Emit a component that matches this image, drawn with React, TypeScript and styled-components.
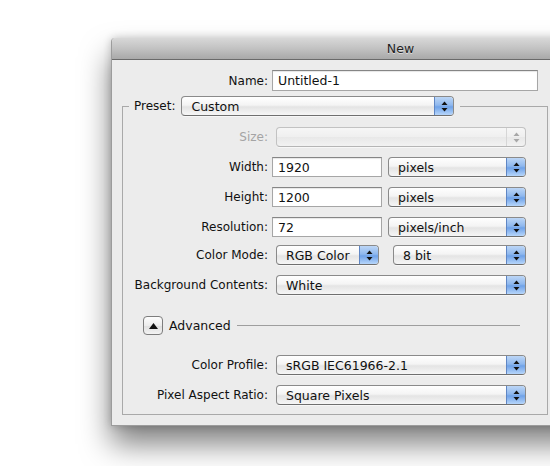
import React from "react"
import styled, { createGlobalStyle } from "styled-components"

const GlobalStyle = createGlobalStyle`
  html, body {
    margin: 0;
    padding: 0;
    background: #ffffff;
    overflow: hidden;
  }
  body {
    font-family: "DejaVu Sans", "Liberation Sans", sans-serif;
  }
`

const Page = styled.div`
  width: 550px;
  height: 466px;
  padding: 38px 0 0 111px;
  box-sizing: border-box;
  overflow: hidden;
  display: flex;
  align-items: flex-start;
`

const Window = styled.div`
  flex-shrink: 0;
  width: 578px;
  background: #ececec;
  border-left: 1px solid #9c9c9c;
  border-bottom: 1px solid #9c9c9c;
  border-top-left-radius: 4px;
  box-sizing: border-box;
  box-shadow: 0 18px 30px rgba(0, 0, 0, 0.5), 0 0 8px rgba(0, 0, 0, 0.2);
`

const TitleBar = styled.div`
  height: 21px;
  line-height: 21px;
  text-align: center;
  font-size: 12.5px;
  color: #1e1e1e;
  text-shadow: 0 1px 0 rgba(255, 255, 255, 0.5);
  background: linear-gradient(#d8d8d8, #c2c2c2 50%, #a9a9a9);
  border-bottom: 1px solid #6a6a6a;
  border-top-left-radius: 4px;
`

const Body = styled.div`
  padding: 10px 0 10px 0;
`

const Row = styled.div<{ $label: number; $mt?: number }>`
  display: grid;
  grid-template-columns: ${p => p.$label}px auto;
  align-items: center;
  column-gap: 4px;
  margin-top: ${p => p.$mt ?? 0}px;
`

const Label = styled.span<{ $disabled?: boolean }>`
  text-align: right;
  font-size: 12px;
  white-space: nowrap;
  color: ${p => (p.$disabled ? "#a4a4a4" : "#111111")};
`

const Controls = styled.div`
  display: flex;
  align-items: center;
`

const TextField = styled.div<{ $width: number; $height?: number }>`
  width: ${p => p.$width}px;
  height: ${p => p.$height ?? 20}px;
  box-sizing: border-box;
  background: #ffffff;
  border: 1px solid #a6a6a6;
  border-top-color: #858585;
  box-shadow: inset 0 1px 1px rgba(0, 0, 0, 0.1);
  padding-left: 5px;
  font-size: 12.5px;
  color: #111;
  display: flex;
  align-items: center;
`

const PopupBox = styled.div<{ $width: number; $ml?: number; $disabled?: boolean }>`
  width: ${p => p.$width}px;
  height: 20px;
  margin-left: ${p => p.$ml ?? 0}px;
  box-sizing: border-box;
  display: flex;
  align-items: stretch;
  border: 1px solid ${p => (p.$disabled ? "#c2c2c2" : "#8a8a8a")};
  border-bottom-color: ${p => (p.$disabled ? "#b5b5b5" : "#6f6f6f")};
  border-radius: 4px;
  overflow: hidden;
  background: ${p =>
    p.$disabled
      ? "linear-gradient(#f6f6f6, #efefef 50%, #e8e8e8 51%, #f2f2f2)"
      : "linear-gradient(#ffffff, #f4f4f4 45%, #e4e4e4 55%, #f6f6f6)"};
  box-shadow: 0 1px 0 rgba(255, 255, 255, 0.6);
`

const PopupText = styled.span`
  flex: 1;
  padding-left: 9px;
  font-size: 12.5px;
  color: #111;
  display: flex;
  align-items: center;
  white-space: nowrap;
  overflow: hidden;
`

const ArrowCap = styled.div<{ $disabled?: boolean }>`
  width: 18px;
  display: flex;
  align-items: center;
  justify-content: center;
  border-left: 1px solid ${p => (p.$disabled ? "#d6d6d6" : "#5f86c4")};
  background: ${p =>
    p.$disabled
      ? "transparent"
      : "linear-gradient(#bcd6f6, #8fb8ee 45%, #6fa2e8 55%, #b7d6fb)"};
`

const Group = styled.fieldset`
  margin: 5px 0 0 10px;
  width: 426px;
  box-sizing: border-box;
  border: 1px solid #a9a9a9;
  padding: 11px 0 9px 0;
  min-width: 0;
`

const Legend = styled.legend`
  margin-left: 6px;
  padding: 0 6px 0 5px;
  display: flex;
  align-items: center;
  gap: 6px;
`

const AdvancedRow = styled.div`
  display: flex;
  align-items: center;
  margin-top: 21px;
  padding-left: 20px;
  padding-right: 27px;
`

const DisclosureButton = styled.div`
  width: 20px;
  height: 19px;
  box-sizing: border-box;
  border: 1px solid #7d7d7d;
  border-radius: 4px;
  background: linear-gradient(#fdfdfd, #ececec 50%, #dedede 51%, #f3f3f3);
  display: flex;
  align-items: center;
  justify-content: center;
`

const AdvancedLabel = styled.span`
  margin-left: 6px;
  font-size: 12.5px;
  color: #111;
`

const Rule = styled.div`
  flex: 1;
  height: 1px;
  margin-left: 6px;
  background: #9e9e9e;
`

const Arrows = ({ disabled }: { disabled?: boolean }) => (
  <svg width="7" height="11" viewBox="0 0 7 11">
    <path d="M3.5 0.5 L6.5 4 L0.5 4 Z" fill={disabled ? "#a8a8a8" : "#111"} />
    <path d="M0.5 7 L6.5 7 L3.5 10.5 Z" fill={disabled ? "#a8a8a8" : "#111"} />
  </svg>
)

function Popup({
  value,
  width,
  ml,
  disabled
}: {
  value?: string
  width: number
  ml?: number
  disabled?: boolean
}) {
  return (
    <PopupBox $width={width} $ml={ml} $disabled={disabled}>
      <PopupText>{value}</PopupText>
      <ArrowCap $disabled={disabled}>
        <Arrows disabled={disabled} />
      </ArrowCap>
    </PopupBox>
  )
}

const LABEL = 145

export default function App() {
  return (
    <>
      <GlobalStyle />
      <Page>
        <Window>
          <TitleBar>New</TitleBar>
          <Body>
            <Row $label={156}>
              <Label>Name:</Label>
              <TextField $width={266} $height={21}>
                Untitled-1
              </TextField>
            </Row>
            <Group>
              <Legend>
                <Label>Preset:</Label>
                <Popup value="Custom" width={273} />
              </Legend>
              <Row $label={LABEL}>
                <Label $disabled>Size:</Label>
                <Controls>
                  <Popup width={250} ml={4} disabled />
                </Controls>
              </Row>
              <Row $label={LABEL} $mt={10}>
                <Label>Width:</Label>
                <Controls>
                  <TextField $width={110}>1920</TextField>
                  <Popup value="pixels" width={138} ml={6} />
                </Controls>
              </Row>
              <Row $label={LABEL} $mt={10}>
                <Label>Height:</Label>
                <Controls>
                  <TextField $width={110}>1200</TextField>
                  <Popup value="pixels" width={138} ml={6} />
                </Controls>
              </Row>
              <Row $label={LABEL} $mt={10}>
                <Label>Resolution:</Label>
                <Controls>
                  <TextField $width={110}>72</TextField>
                  <Popup value="pixels/inch" width={138} ml={6} />
                </Controls>
              </Row>
              <Row $label={LABEL} $mt={8}>
                <Label>Color Mode:</Label>
                <Controls>
                  <Popup value="RGB Color" width={103} ml={4} />
                  <Popup value="8 bit" width={133} ml={14} />
                </Controls>
              </Row>
              <Row $label={LABEL} $mt={10}>
                <Label>Background Contents:</Label>
                <Controls>
                  <Popup value="White" width={250} ml={4} />
                </Controls>
              </Row>
              <AdvancedRow>
                <DisclosureButton>
                  <svg width="9" height="6" viewBox="0 0 9 6">
                    <path d="M4.5 0 L9 6 L0 6 Z" fill="#111" />
                  </svg>
                </DisclosureButton>
                <AdvancedLabel>Advanced</AdvancedLabel>
                <Rule />
              </AdvancedRow>
              <Row $label={LABEL} $mt={20}>
                <Label>Color Profile:</Label>
                <Controls>
                  <Popup value="sRGB IEC61966-2.1" width={250} ml={4} />
                </Controls>
              </Row>
              <Row $label={LABEL} $mt={10}>
                <Label>Pixel Aspect Ratio:</Label>
                <Controls>
                  <Popup value="Square Pixels" width={250} ml={4} />
                </Controls>
              </Row>
            </Group>
          </Body>
        </Window>
      </Page>
    </>
  )
}
